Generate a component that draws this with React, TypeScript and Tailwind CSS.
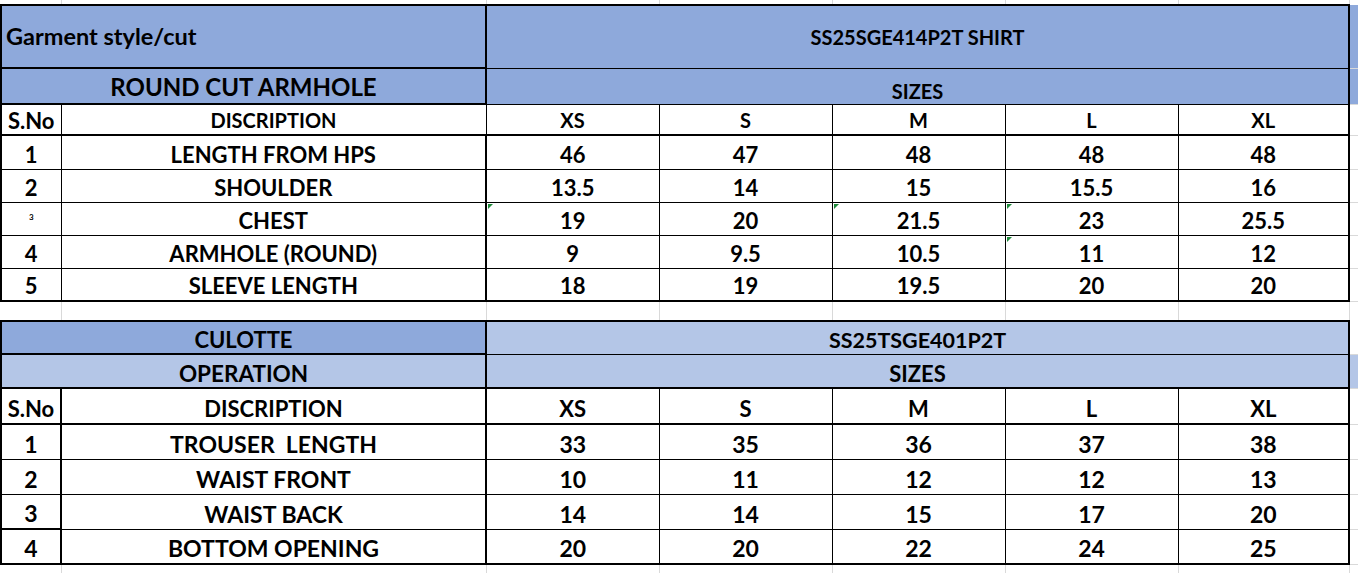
import React from "react"

const SIZES = ["XS", "S", "M", "L", "XL"]

type Row = { no: string; label: string; values: string[]; flags?: number[]; tinyNo?: boolean }

const SHIRT: Row[] = [
  { no: "1", label: "LENGTH FROM HPS", values: ["46", "47", "48", "48", "48"] },
  { no: "2", label: "SHOULDER", values: ["13.5", "14", "15", "15.5", "16"] },
  { no: "3", label: "CHEST", values: ["19", "20", "21.5", "23", "25.5"], flags: [0, 2, 3], tinyNo: true },
  { no: "4", label: "ARMHOLE (ROUND)", values: ["9", "9.5", "10.5", "11", "12"], flags: [3] },
  { no: "5", label: "SLEEVE LENGTH", values: ["18", "19", "19.5", "20", "20"] },
]

const CULOTTE: Row[] = [
  { no: "1", label: "TROUSER  LENGTH", values: ["33", "35", "36", "37", "38"] },
  { no: "2", label: "WAIST FRONT", values: ["10", "11", "12", "12", "13"] },
  { no: "3", label: "WAIST BACK", values: ["14", "14", "15", "17", "20"] },
  { no: "4", label: "BOTTOM OPENING", values: ["20", "20", "22", "24", "25"] },
]

// excel's little green "number stored as text" marker
function Flag() {
  return (
    <span className="absolute left-[1px] top-[1px] h-0 w-0 border-t-[5px] border-r-[5px] border-t-[#1f8a3b] border-r-transparent" />
  )
}

// light sheet gridlines outside the tables
function GapRow({ h }: { h: string }) {
  return (
    <tr className={h}>
      <td className="border-r border-[#d9d9d9]" />
      <td className="border-r border-[#d9d9d9]" />
      <td className="border-r border-[#d9d9d9]" />
      <td className="border-r border-[#d9d9d9]" />
      <td className="border-r border-[#d9d9d9]" />
      <td className="border-r border-[#d9d9d9]" />
      <td className="border-r border-[#d9d9d9]" />
      <td />
    </tr>
  )
}

function Edge() {
  return <td className="border-b border-[#d9d9d9]" />
}

export default function App() {
  return (
    <div className="h-[573px] w-[1358px] overflow-hidden bg-white font-['Lato',sans-serif] font-bold text-black">
      <table className="w-[1358px] table-fixed border-collapse">
        <colgroup>
          <col className="w-[60px]" />
          <col className="w-[425px]" />
          <col className="w-[173px]" />
          <col className="w-[173px]" />
          <col className="w-[173px]" />
          <col className="w-[173px]" />
          <col className="w-[171px]" />
          <col className="w-[10px]" />
        </colgroup>
        <tbody>
          <GapRow h="h-[5px]" />

          {/* shirt spec */}
          <tr className="h-[63px] bg-[#8ea9db]">
            <td colSpan={2} className="border-2 border-black pl-[4px] text-left align-middle text-[23.5px]">
              Garment style/cut
            </td>
            <td colSpan={5} className="border-2 border-b border-black text-center align-middle text-[20px]">
              SS25SGE414P2T SHIRT
            </td>
            <Edge />
          </tr>
          <tr className="h-[36px] bg-[#8ea9db]">
            <td colSpan={2} className="border-2 border-black pb-[4px] text-center align-bottom text-[24px] leading-none">
              ROUND CUT ARMHOLE
            </td>
            <td colSpan={5} className="border-2 border-y border-black pb-[3px] text-center align-bottom text-[20px] leading-none">
              SIZES
            </td>
            <Edge />
          </tr>
          <tr className="h-[31px] text-[20px]">
            <td className="border-2 border-r border-b-2 border-black text-center align-bottom text-[22px] leading-[1.2]">S.No</td>
            <td className="border border-b-2 border-black text-center align-bottom leading-[1.35]">DISCRIPTION</td>
            {SIZES.map((s, i) => (
              <td
                key={s}
                className={
                  i === 4
                    ? "border border-r-2 border-b-2 border-black text-center align-bottom leading-[1.35]"
                    : "border border-b-2 border-black text-center align-bottom leading-[1.35]"
                }
              >
                {s}
              </td>
            ))}
            <Edge />
          </tr>
          {SHIRT.map((r, ri) => (
            <tr key={r.no} className={ri === 0 ? "h-[34px] text-[22px]" : "h-[33px] text-[22px]"}>
              <td
                className={
                  ri === SHIRT.length - 1
                    ? "border border-l-2 border-b-2 border-black pb-[3px] text-center align-bottom leading-none"
                    : "border border-l-2 border-black pb-[3px] text-center align-bottom leading-none"
                }
              >
                {r.tinyNo ? <span className="block pb-[11px] text-[8px] leading-none">{r.no}</span> : r.no}
              </td>
              <td
                className={
                  ri === SHIRT.length - 1
                    ? "border border-r-2 border-b-2 border-black pb-[3px] text-center align-bottom leading-none"
                    : "border border-r-2 border-black pb-[3px] text-center align-bottom leading-none"
                }
              >
                {r.label}
              </td>
              {r.values.map((v, i) => (
                <td
                  key={i}
                  className={
                    "relative pb-[3px] text-center align-bottom leading-none " +
                    (ri === SHIRT.length - 1
                      ? i === 4
                        ? "border border-r-2 border-b-2 border-black"
                        : "border border-b-2 border-black"
                      : i === 4
                        ? "border border-r-2 border-black"
                        : "border border-black")
                  }
                >
                  {r.flags?.includes(i) && <Flag />}
                  {v}
                </td>
              ))}
              <Edge />
            </tr>
          ))}

          <GapRow h="h-[20px]" />

          {/* culotte spec */}
          <tr className="h-[33px] text-[22px]">
            <td colSpan={2} className="border-2 border-black bg-[#8ea9db] pb-[2px] text-center align-bottom leading-none">
              CULOTTE
            </td>
            <td colSpan={5} className="border-2 border-b border-black bg-[#b4c6e7] pb-[2px] text-center align-bottom text-[21.5px] leading-none">
              SS25TSGE401P2T
            </td>
            <Edge />
          </tr>
          <tr className="h-[34px] bg-[#b4c6e7] text-[22px]">
            <td colSpan={2} className="border-2 border-t border-black pb-[2px] text-center align-bottom text-[22.5px] leading-none">
              OPERATION
            </td>
            <td colSpan={5} className="border-2 border-t border-l border-black pb-[2px] text-center align-bottom leading-none">
              SIZES
            </td>
            <Edge />
          </tr>
          <tr className="h-[36px] text-[22px]">
            <td className="border-2 border-black pb-[3px] text-center align-bottom leading-none">S.No</td>
            <td className="border border-l-2 border-r-2 border-b-2 border-black pb-[3px] text-center align-bottom leading-none">
              DISCRIPTION
            </td>
            {SIZES.map((s, i) => (
              <td
                key={s}
                className={
                  i === 4
                    ? "border border-r-2 border-b-2 border-black pb-[3px] text-center align-bottom leading-none"
                    : "border border-b-2 border-black pb-[3px] text-center align-bottom leading-none"
                }
              >
                {s}
              </td>
            ))}
            <Edge />
          </tr>
          {CULOTTE.map((r, ri) => (
            <tr key={r.no} className="h-[35px] text-[23px]">
              <td
                className={
                  ri === CULOTTE.length - 1
                    ? "border-2 border-black pb-[3px] text-center align-bottom leading-none"
                    : "border-2 border-y border-black pb-[3px] text-center align-bottom leading-none"
                }
              >
                {r.no}
              </td>
              <td
                className={
                  ri === CULOTTE.length - 1
                    ? "whitespace-pre border border-r-2 border-b-2 border-black pb-[3px] text-center align-bottom leading-none"
                    : "whitespace-pre border border-r-2 border-black pb-[3px] text-center align-bottom leading-none"
                }
              >
                {r.label}
              </td>
              {r.values.map((v, i) => (
                <td
                  key={i}
                  className={
                    "pb-[3px] text-center align-bottom leading-none " +
                    (ri === CULOTTE.length - 1
                      ? i === 4
                        ? "border border-r-2 border-b-2 border-black"
                        : "border border-b-2 border-black"
                      : i === 4
                        ? "border border-r-2 border-black"
                        : "border border-black")
                  }
                >
                  {v}
                </td>
              ))}
              <Edge />
            </tr>
          ))}

          <GapRow h="h-[12px]" />
        </tbody>
      </table>
    </div>
  )
}
